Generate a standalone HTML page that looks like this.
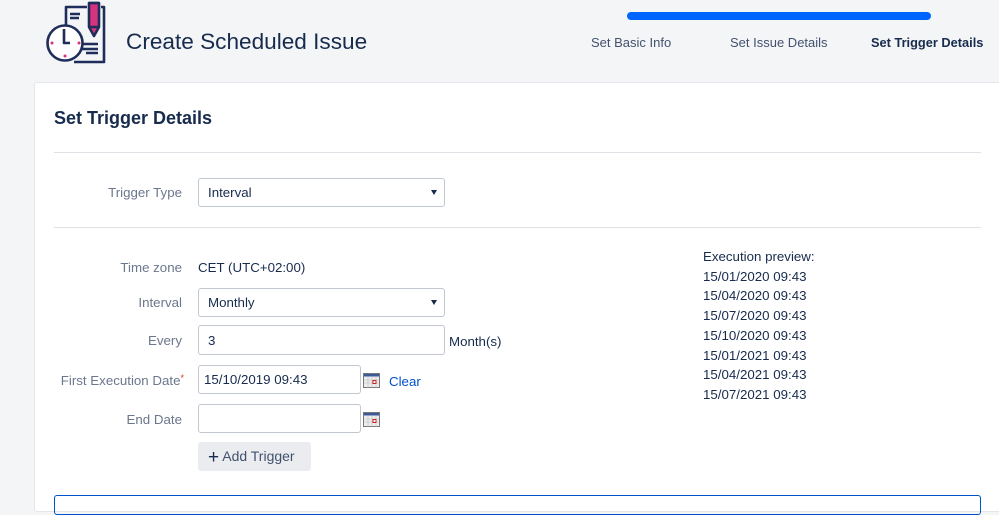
<!DOCTYPE html>
<html><head><meta charset="utf-8"><style>
*{box-sizing:border-box;margin:0;padding:0}
body{width:999px;height:501px;overflow:hidden;background:#f4f5f7;font-family:"Liberation Sans",sans-serif;color:#172b4d;position:relative;font-size:13.3px}
.a{position:absolute;white-space:nowrap}
.lbl{color:#6b778c;text-align:right;width:164px;left:18px}
.inp{position:absolute;background:#fff;border:1px solid #c1c7d0;border-radius:3px;padding-left:9px;line-height:27px;font-size:13.3px;color:#172b4d}
.sel::after{content:"";position:absolute;right:7px;top:11px;border-left:3.5px solid transparent;border-right:3.5px solid transparent;border-top:5px solid #172b4d}
.hr{position:absolute;left:54px;width:927px;height:1px;background:#dfe1e6}
.cal{position:absolute;width:17px;height:15px}
</style></head><body>
<svg class="a" style="left:30px;top:0" width="90" height="70" viewBox="0 0 90 70">
<g fill="none" stroke="#1f2d5a" stroke-width="2.6" stroke-linejoin="round">
<path d="M57 7 H36 V26"/><path d="M71 7 H74 V62 H44"/>
<path d="M40 14 H50 M40 18 H49 M52 44 H68 M52 49 H68 M56 53 H68"/>
<circle cx="35" cy="43" r="17.5" fill="#fff"/>
<path d="M34 29 V43 H40"/>
<path d="M59 3 V27 L64 36 L69 27 V3 Z" fill="#d6337f"/>
<path d="M59 3 H69 M59 27 H69"/>
</g>
<g fill="#d6337f"><circle cx="22" cy="43" r="1.5"/><circle cx="49" cy="43" r="1.5"/><circle cx="35" cy="56" r="1.5"/></g>
</svg>
<div class="a" style="left:126px;top:29px;font-size:22.6px;color:#172b4d">Create Scheduled Issue</div>
<div class="a" style="left:627px;top:12px;width:304px;height:8px;border-radius:4px;background:#0065ff"></div>
<div class="a" style="left:591px;top:35px;color:#42526e;font-size:13px">Set Basic Info</div>
<div class="a" style="left:730px;top:35px;color:#42526e;font-size:13px">Set Issue Details</div>
<div class="a" style="left:871px;top:35px;color:#172b4d;font-weight:bold;font-size:12.8px">Set Trigger Details</div>
<div class="a" style="left:34px;top:82px;width:980px;height:430px;background:#fff;border:1px solid #e4e6ea;border-radius:3px"></div>
<div class="a" style="left:54px;top:108px;font-size:18px;font-weight:bold;color:#172b4d">Set Trigger Details</div>
<div class="hr" style="top:152px"></div>
<div class="a lbl" style="top:185px">Trigger Type</div>
<div class="inp sel" style="left:198px;top:178px;width:247px;height:29px">Interval</div>
<div class="hr" style="top:227px"></div>
<div class="a lbl" style="top:260px">Time zone</div>
<div class="a" style="left:198px;top:260px">CET (UTC+02:00)</div>
<div class="a lbl" style="top:295px">Interval</div>
<div class="inp sel" style="left:198px;top:288px;width:247px;height:29px">Monthly</div>
<div class="a lbl" style="top:333px">Every</div>
<div class="inp" style="left:198px;top:325px;width:247px;height:30px;line-height:30px">3</div>
<div class="a" style="left:449px;top:334px">Month(s)</div>
<div class="a lbl" style="top:373px;left:14px;width:170px">First Execution Date<span style="color:#de350b;font-size:9px;vertical-align:top">*</span></div>
<div class="inp" style="left:198px;top:365px;width:163px;height:29px;padding-left:5px">15/10/2019 09:43</div>
<svg class="cal" style="left:363px;top:373px" viewBox="0 0 17 15"><rect x="0.5" y="0.5" width="16" height="14" fill="#eee" stroke="#777"/><rect x="1" y="1" width="15" height="2.5" fill="#3a5a9a"/><path d="M1 7H16M1 10H16M5 4V15M9 4V15M13 4V15" stroke="#bbb" stroke-width=".6"/><rect x="10" y="7.5" width="3" height="3" fill="#fff" stroke="#c22"/></svg>
<div class="a" style="left:389px;top:374px;color:#0052cc">Clear</div>
<div class="a lbl" style="top:412px">End Date</div>
<div class="inp" style="left:198px;top:404px;width:163px;height:29px"></div>
<svg class="cal" style="left:363px;top:412px" viewBox="0 0 17 15"><rect x="0.5" y="0.5" width="16" height="14" fill="#eee" stroke="#777"/><rect x="1" y="1" width="15" height="2.5" fill="#3a5a9a"/><path d="M1 7H16M1 10H16M5 4V15M9 4V15M13 4V15" stroke="#bbb" stroke-width=".6"/><rect x="10" y="7.5" width="3" height="3" fill="#fff" stroke="#c22"/></svg>
<div class="a" style="left:198px;top:442px;width:113px;height:29px;background:#ebecf0;border-radius:3px;line-height:29px;padding-left:10px;color:#42526e;font-size:14px"><span style="font-size:19px;vertical-align:-2px;color:#172b4d">+</span> Add Trigger</div>
<div class="a" style="left:703px;top:247px;line-height:19.7px;color:#172b4d">Execution preview:<br>15/01/2020 09:43<br>15/04/2020 09:43<br>15/07/2020 09:43<br>15/10/2020 09:43<br>15/01/2021 09:43<br>15/04/2021 09:43<br>15/07/2021 09:43</div>
<div class="a" style="left:54px;top:495px;width:927px;height:20px;border:1.5px solid #0052cc;border-radius:3px"></div>
</body></html>
